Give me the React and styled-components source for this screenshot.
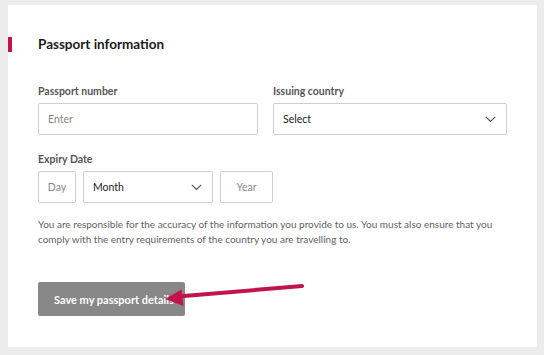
import React from "react";
import styled, { createGlobalStyle } from "styled-components";

const Global = createGlobalStyle`
  html, body { margin: 0; padding: 0; background: #ececec; }
  body { font-family: Lato, "Noto Sans", sans-serif; }
  * { box-sizing: border-box; }
`;

const Page = styled.div`
  width: 544px;
  height: 355px;
  padding: 5px 7px 8px 8px;
  background: #ececec;
`;

const Card = styled.section`
  position: relative;
  background: #fff;
  height: 342px;
  padding-top: 31px;
`;

const Header = styled.div`
  display: flex;
  align-items: flex-start;
  gap: 26px;
  height: 16px;
`;

const Marker = styled.span`
  width: 4px;
  height: 15px;
  background: #c0144a;
  margin-top: 1px;
`;

const Title = styled.h2`
  margin: 0;
  font-size: 13.5px;
  line-height: 16px;
  font-weight: 700;
  color: #1a1a1a;
`;

const Body = styled.div`
  padding: 0 30px;
`;

const Row = styled.div`
  display: grid;
  grid-template-columns: 220px 234px;
  column-gap: 15px;
  margin-top: 33px;
`;

const Field = styled.div`
  display: flex;
  flex-direction: column;
`;

const Label = styled.label`
  font-size: 10.5px;
  line-height: 13px;
  font-weight: 700;
  color: #555;
  margin-bottom: 5px;
`;

const Box = styled.div`
  display: flex;
  align-items: center;
  justify-content: ${(p) => (p.$center ? "center" : "space-between")};
  height: 32px;
  width: ${(p) => (p.$w ? p.$w + "px" : "auto")};
  border: 1px solid #cfcfcf;
  border-radius: 2px;
  padding: ${(p) => (p.$center ? "0" : "0 10px 0 9px")};
  font-size: 10.5px;
  color: ${(p) => (p.$placeholder ? "#888" : "#222")};
`;

const DateRow = styled.div`
  display: flex;
  gap: 7px;
`;

const ExpiryField = styled(Field)`
  margin-top: 18px;
`;

const Note = styled.p`
  margin: 14px 0 0;
  font-size: 10px;
  line-height: 15px;
  color: #5f5f5f;
`;

const Button = styled.button`
  margin-top: 35px;
  width: 147px;
  height: 34px;
  border: none;
  border-radius: 2px;
  background: #888;
  color: #fff;
  font-family: inherit;
  font-size: 11px;
  font-weight: 700;
  text-align: left;
  padding: 0 0 0 16px;
  white-space: nowrap;
  overflow: hidden;
`;

const Arrow = styled.svg`
  position: absolute;
  left: 0;
  top: 0;
  pointer-events: none;
`;

const Chevron = () => (
  <svg width="11" height="7" viewBox="0 0 11 7">
    <path d="M0.8 0.8 L5.5 5.5 L10.2 0.8" fill="none" stroke="#555" strokeWidth="1.2" />
  </svg>
);

export default function App() {
  return (
    <>
      <Global />
      <Page>
        <Card>
          <Header>
            <Marker />
            <Title>Passport information</Title>
          </Header>
          <Body>
            <Row>
              <Field>
                <Label>Passport number</Label>
                <Box $placeholder>Enter</Box>
              </Field>
              <Field>
                <Label>Issuing country</Label>
                <Box>
                  Select
                  <Chevron />
                </Box>
              </Field>
            </Row>
            <ExpiryField>
              <Label>Expiry Date</Label>
              <DateRow>
                <Box $w={38} $center $placeholder>Day</Box>
                <Box $w={130}>
                  Month
                  <Chevron />
                </Box>
                <Box $w={53} $center $placeholder>Year</Box>
              </DateRow>
            </ExpiryField>
            <Note>
              You are responsible for the accuracy of the information you provide to us. You must also ensure that you
              <br />
              comply with the entry requirements of the country you are travelling to.
            </Note>
            <Button>Save my passport details</Button>
          </Body>
          <Arrow width="529" height="342" viewBox="0 0 529 342">
            <line x1="294" y1="281" x2="170" y2="291.5" stroke="#c0144a" strokeWidth="4" strokeLinecap="round" />
            <polygon points="157,294 173.5,284.5 175.5,301" fill="#c0144a" />
          </Arrow>
        </Card>
      </Page>
    </>
  );
}
